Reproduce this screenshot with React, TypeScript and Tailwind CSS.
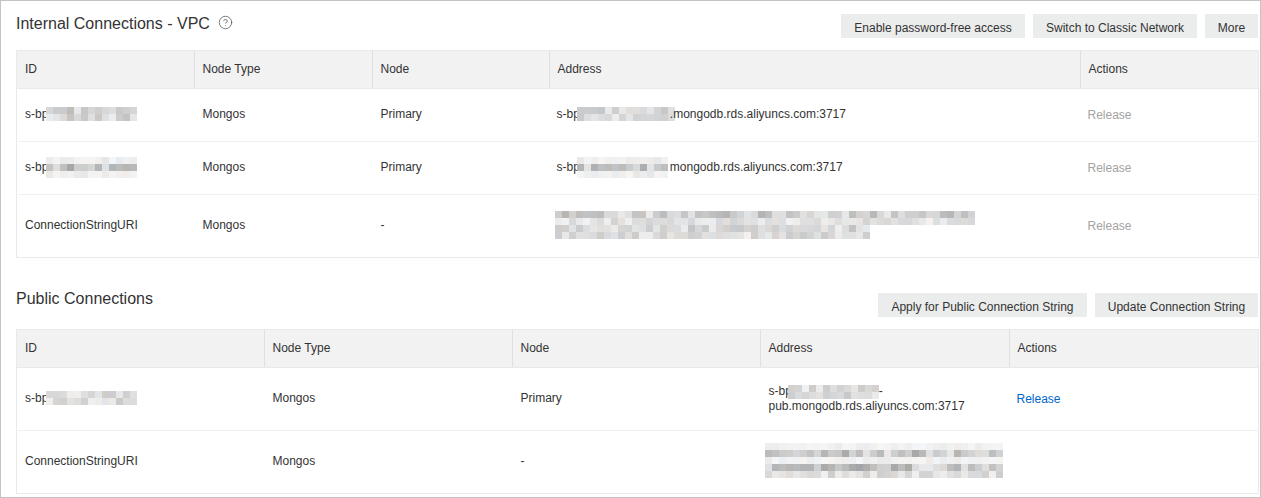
import { CircleHelp } from 'lucide-react'

// seeded so the mosaic stays the same between runs
function mosaicColor(seed: number, strength: number) {
  const r = Math.abs(Math.sin(seed * 12.9898) * 43758.5453) % 1
  const t = Math.abs(Math.sin(seed * 78.233) * 12543.123) % 1
  const base = 250 - strength * (r * 0.8 + 0.2)
  const tint = (t - 0.5) * 6
  return `rgb(${Math.round(base + tint)},${Math.round(base)},${Math.round(base - tint)})`
}

function Mosaic({ seed, rows, className }: { seed: number; rows: { cols: number; strength: number }[]; className?: string }) {
  const width = Math.max(...rows.map((r) => r.cols)) * 7
  return (
    <svg width={width} height={rows.length * 7} className={className} shapeRendering="crispEdges">
      {rows.map((row, y) =>
        Array.from({ length: row.cols }).map((_, x) => (
          <rect key={`${x}-${y}`} x={x * 7} y={y * 7} width={7} height={7} fill={mosaicColor(seed + x * 31 + y * 97 + 1, row.strength)} />
        )),
      )}
    </svg>
  )
}

const th = 'h-[38px] px-2 pb-[2px] text-left font-normal align-middle'
const thDivider = 'relative after:absolute after:right-0 after:top-0 after:bottom-0 after:w-px after:bg-[#dedfdf]'
const td = 'px-2 pb-[2px] align-middle'
const tdPlain = 'px-2 align-middle'

function Btn({ label, className }: { label: string; className: string }) {
  return <button className={`h-6 bg-[#ebecec] pt-1 text-xs text-[#333] ${className}`}>{label}</button>
}

function Release({ active }: { active?: boolean }) {
  return <a className={active ? '-ml-px text-[#0066cc]' : '-ml-px text-[#a3a3a3]'}>Release</a>
}

function Masked({ seed, cols, rows, suffix, margin, className }: { seed: number; cols: number; rows: number[]; suffix?: string; margin: string; className?: string }) {
  return (
    <span className={`flex items-center ${className ?? ''}`}>
      s-bp
      <Mosaic seed={seed} rows={rows.map((strength) => ({ cols, strength }))} className={`shrink-0 ${margin}`} />
      {suffix}
    </span>
  )
}

function Head({ labels }: { labels: string[] }) {
  return (
    <thead>
      <tr className="bg-[#f2f2f2] border-b border-[#e8eaea]">
        {labels.map((label, i) => (
          <th key={label} className={i < labels.length - 1 ? `${th} ${thDivider}` : th}>
            {label}
          </th>
        ))}
      </tr>
    </thead>
  )
}

export default function App() {
  return (
    <div className="h-[498px] w-[1261px] overflow-hidden border border-[#c4c4c4] pl-[15px] pr-[2px] pt-[13px] font-['Liberation_Sans',Arial,sans-serif] text-xs text-[#333] bg-white">
      <div className="mb-3 flex h-6 items-center justify-between">
        <h2 className="flex items-center text-base leading-6 -mt-1">
          Internal Connections - VPC
          <CircleHelp size={15} strokeWidth={1.1} className="ml-2 -mt-[3px] text-[#444]" />
        </h2>
        <div className="flex gap-2">
          <Btn label="Enable password-free access" className="w-[184px]" />
          <Btn label="Switch to Classic Network" className="w-[164px]" />
          <Btn label="More" className="w-[53px]" />
        </div>
      </div>

      <table className="w-[1242px] table-fixed border border-[#e8eaea] border-collapse">
        <colgroup>
          <col className="w-[178px]" />
          <col className="w-[178px]" />
          <col className="w-[177px]" />
          <col className="w-[531px]" />
          <col className="w-[178px]" />
        </colgroup>
        <Head labels={['ID', 'Node Type', 'Node', 'Address', 'Actions']} />
        <tbody>
          <tr className="h-[53px] border-b border-[#f0f1f1]">
            <td className={td}><Masked seed={3} cols={13} rows={[70, 55]} margin="-ml-[2px]" /></td>
            <td className={td}>Mongos</td>
            <td className={td}>Primary</td>
            <td className={td}><Masked seed={11} cols={14} rows={[55, 50]} margin="-ml-[3px] -mr-[5px]" className="-ml-px" suffix=".mongodb.rds.aliyuncs.com:3717" /></td>
            <td className={tdPlain}><Release /></td>
          </tr>
          <tr className="h-[53px] border-b border-[#f0f1f1]">
            <td className={td}><Masked seed={17} cols={13} rows={[20, 85, 20]} margin="-ml-[2px]" /></td>
            <td className={td}>Mongos</td>
            <td className={td}>Primary</td>
            <td className={td}><Masked seed={23} cols={13} rows={[20, 85, 20]} margin="-ml-[3px] mr-[2px]" className="-ml-px" suffix="mongodb.rds.aliyuncs.com:3717" /></td>
            <td className={tdPlain}><Release /></td>
          </tr>
          <tr className="h-[63px]">
            <td className={td}>ConnectionStringURI</td>
            <td className={td}>Mongos</td>
            <td className={td}>-</td>
            <td className={td}>
              <Mosaic
                seed={41}
                className="-ml-[3px] block"
                rows={[
                  { cols: 60, strength: 70 },
                  { cols: 60, strength: 40 },
                  { cols: 45, strength: 55 },
                  { cols: 45, strength: 50 },
                ]}
              />
            </td>
            <td className={tdPlain}><Release /></td>
          </tr>
        </tbody>
      </table>

      <div className="mb-3 mt-[35px] flex h-6 items-center justify-between">
        <h2 className="text-base leading-6 -mt-[13px]">Public Connections</h2>
        <div className="flex gap-2">
          <Btn label="Apply for Public Connection String" className="w-[209px]" />
          <Btn label="Update Connection String" className="w-[163px]" />
        </div>
      </div>

      <table className="w-[1242px] table-fixed border border-[#e8eaea] border-collapse">
        <colgroup>
          <col className="w-[248px]" />
          <col className="w-[248px]" />
          <col className="w-[248px]" />
          <col className="w-[249px]" />
          <col className="w-[249px]" />
        </colgroup>
        <Head labels={['ID', 'Node Type', 'Node', 'Address', 'Actions']} />
        <tbody>
          <tr className="h-[63px] border-b border-[#f0f1f1]">
            <td className={td}><Masked seed={53} cols={13} rows={[50, 50]} margin="-ml-[2px]" /></td>
            <td className={td}>Mongos</td>
            <td className={td}>Primary</td>
            <td className={`${tdPlain} leading-[15px]`}>
              <Masked seed={61} cols={13} rows={[50, 60]} margin="-ml-1" suffix="-" />
              <div>pub.mongodb.rds.aliyuncs.com:3717</div>
            </td>
            <td className={tdPlain}><Release active /></td>
          </tr>
          <tr className="h-[63px]">
            <td className={td}>ConnectionStringURI</td>
            <td className={td}>Mongos</td>
            <td className={td}>-</td>
            <td className="px-2 pb-1 align-middle">
              <Mosaic
                seed={71}
                className="-ml-1 block"
                rows={[
                  { cols: 34, strength: 15 },
                  { cols: 34, strength: 85 },
                  { cols: 34, strength: 15 },
                  { cols: 34, strength: 85 },
                  { cols: 34, strength: 45 },
                ]}
              />
            </td>
            <td className={td}></td>
          </tr>
        </tbody>
      </table>
    </div>
  )
}
